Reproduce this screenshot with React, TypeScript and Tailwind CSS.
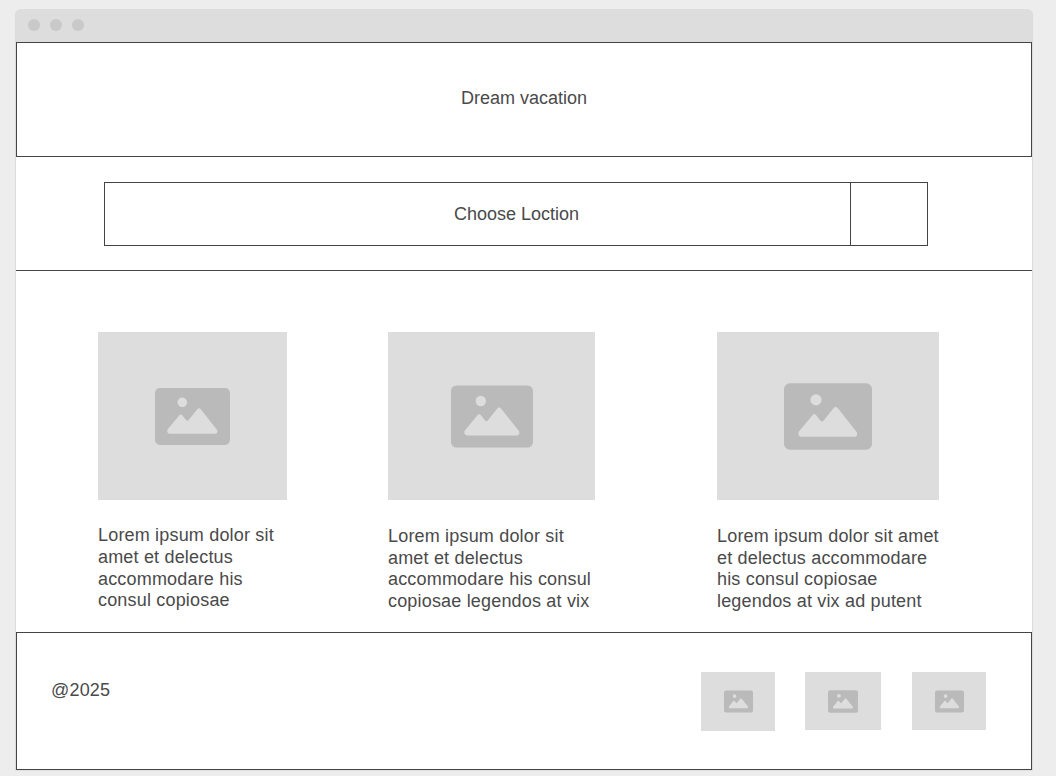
type PlaceholderProps = { box: string; icon: string };

function Placeholder({ box, icon }: PlaceholderProps) {
  return (
    <div className={`flex shrink-0 items-center justify-center bg-[#dddddd] ${box}`}>
      <svg viewBox="0 0 88 66.6" className={`shrink-0 ${icon}`} aria-hidden="true">
        <rect width="88" height="66.6" rx="6" fill="#bababa" />
        <circle cx="32" cy="16.7" r="5.6" fill="#dddddd" />
        <path
          d="M14.9 48.4L28.4 32Q30.3 29.7 32.2 32L36.3 37.2Q38 39.2 39.7 37.2L49.5 25Q51.7 22.4 53.9 25L72.7 48.7Q74.2 51.2 72.4 53Q71.7 53.6 70.6 53.6H17.3Q15.5 53.6 14.7 52Q13.8 50 14.9 48.4Z"
          fill="#dddddd"
        />
      </svg>
    </div>
  );
}

type CardProps = PlaceholderProps & { lines: string[]; width: string; textOffset: string };

function Card({ lines, width, textOffset, box, icon }: CardProps) {
  return (
    <article className={`shrink-0 ${width}`}>
      <Placeholder box={box} icon={icon} />
      <p className={`leading-[21.6px] tracking-[0.18px] whitespace-nowrap ${textOffset}`}>
        {lines.map((line) => (
          <span key={line} className="block">{line}</span>
        ))}
      </p>
    </article>
  );
}

export default function App() {
  return (
    <div className="h-[776px] w-[1056px] overflow-hidden bg-[#ededed] pt-[9px] pl-[15px] font-['Liberation_Sans',Arial,sans-serif] text-[18px] text-[#4a4a4a]">
      <div className="w-[1018px] rounded-t-[6px] bg-[#dddddd] shadow-[0_1px_2px_rgba(0,0,0,0.06)]">
        <div className="flex h-[33px] items-center gap-[10px] pb-px pl-[13px]">
          <span className="size-3 rounded-full bg-[#c9c9c9]" />
          <span className="size-3 rounded-full bg-[#c9c9c9]" />
          <span className="size-3 rounded-full bg-[#c9c9c9]" />
        </div>
        <div className="mx-px bg-white">
          <header className="flex h-[115px] items-center justify-center border border-[#444444] pb-[3px]">
            <h1>Dream vacation</h1>
          </header>
          <section className="h-[114px] border-b border-[#444444] pt-[25px] pl-[88px]">
            <div className="flex h-16 w-[824px] border border-[#444444]">
              <div className="flex grow items-center justify-center pl-[78px]">Choose Loction</div>
              <div className="w-[77px] border-l border-[#444444]" />
            </div>
          </section>
          <main className="flex h-[361px] pt-[61px] pl-[82px]">
            <Card
              width="w-[290px]"
              box="h-[168px] w-[189px]"
              icon="h-[57px] w-[75px]"
              textOffset="pt-[25.45px]"
              lines={["Lorem ipsum dolor sit", "amet et delectus", "accommodare his", "consul copiosae"]}
            />
            <Card
              width="w-[329px]"
              box="h-[168px] w-[207px] pt-px"
              icon="h-[63px] w-[82px]"
              textOffset="pt-[26.1px]"
              lines={["Lorem ipsum dolor sit", "amet et delectus", "accommodare his consul", "copiosae legendos at vix"]}
            />
            <Card
              width="w-[222px]"
              box="h-[168px] w-[222px]"
              icon="h-[67px] w-[88px]"
              textOffset="pt-[26.1px]"
              lines={["Lorem ipsum dolor sit amet", "et delectus accommodare", "his consul copiosae", "legendos at vix ad putent"]}
            />
          </main>
          <footer className="flex h-[138px] items-start justify-between border border-[#444444] pt-[39px] pr-[45px] pl-[34px]">
            <p className="pt-[5px] tracking-[0.18px]">@2025</p>
            <div className="flex items-start">
              <Placeholder box="h-[59px] w-[74px] mr-[30px]" icon="h-[23px] w-[29px]" />
              <Placeholder box="h-[58px] w-[76px] mr-[31px] pt-px" icon="h-[23px] w-[30px]" />
              <Placeholder box="h-[58px] w-[74px] pt-px" icon="h-[23px] w-[29px]" />
            </div>
          </footer>
        </div>
      </div>
    </div>
  );
}
